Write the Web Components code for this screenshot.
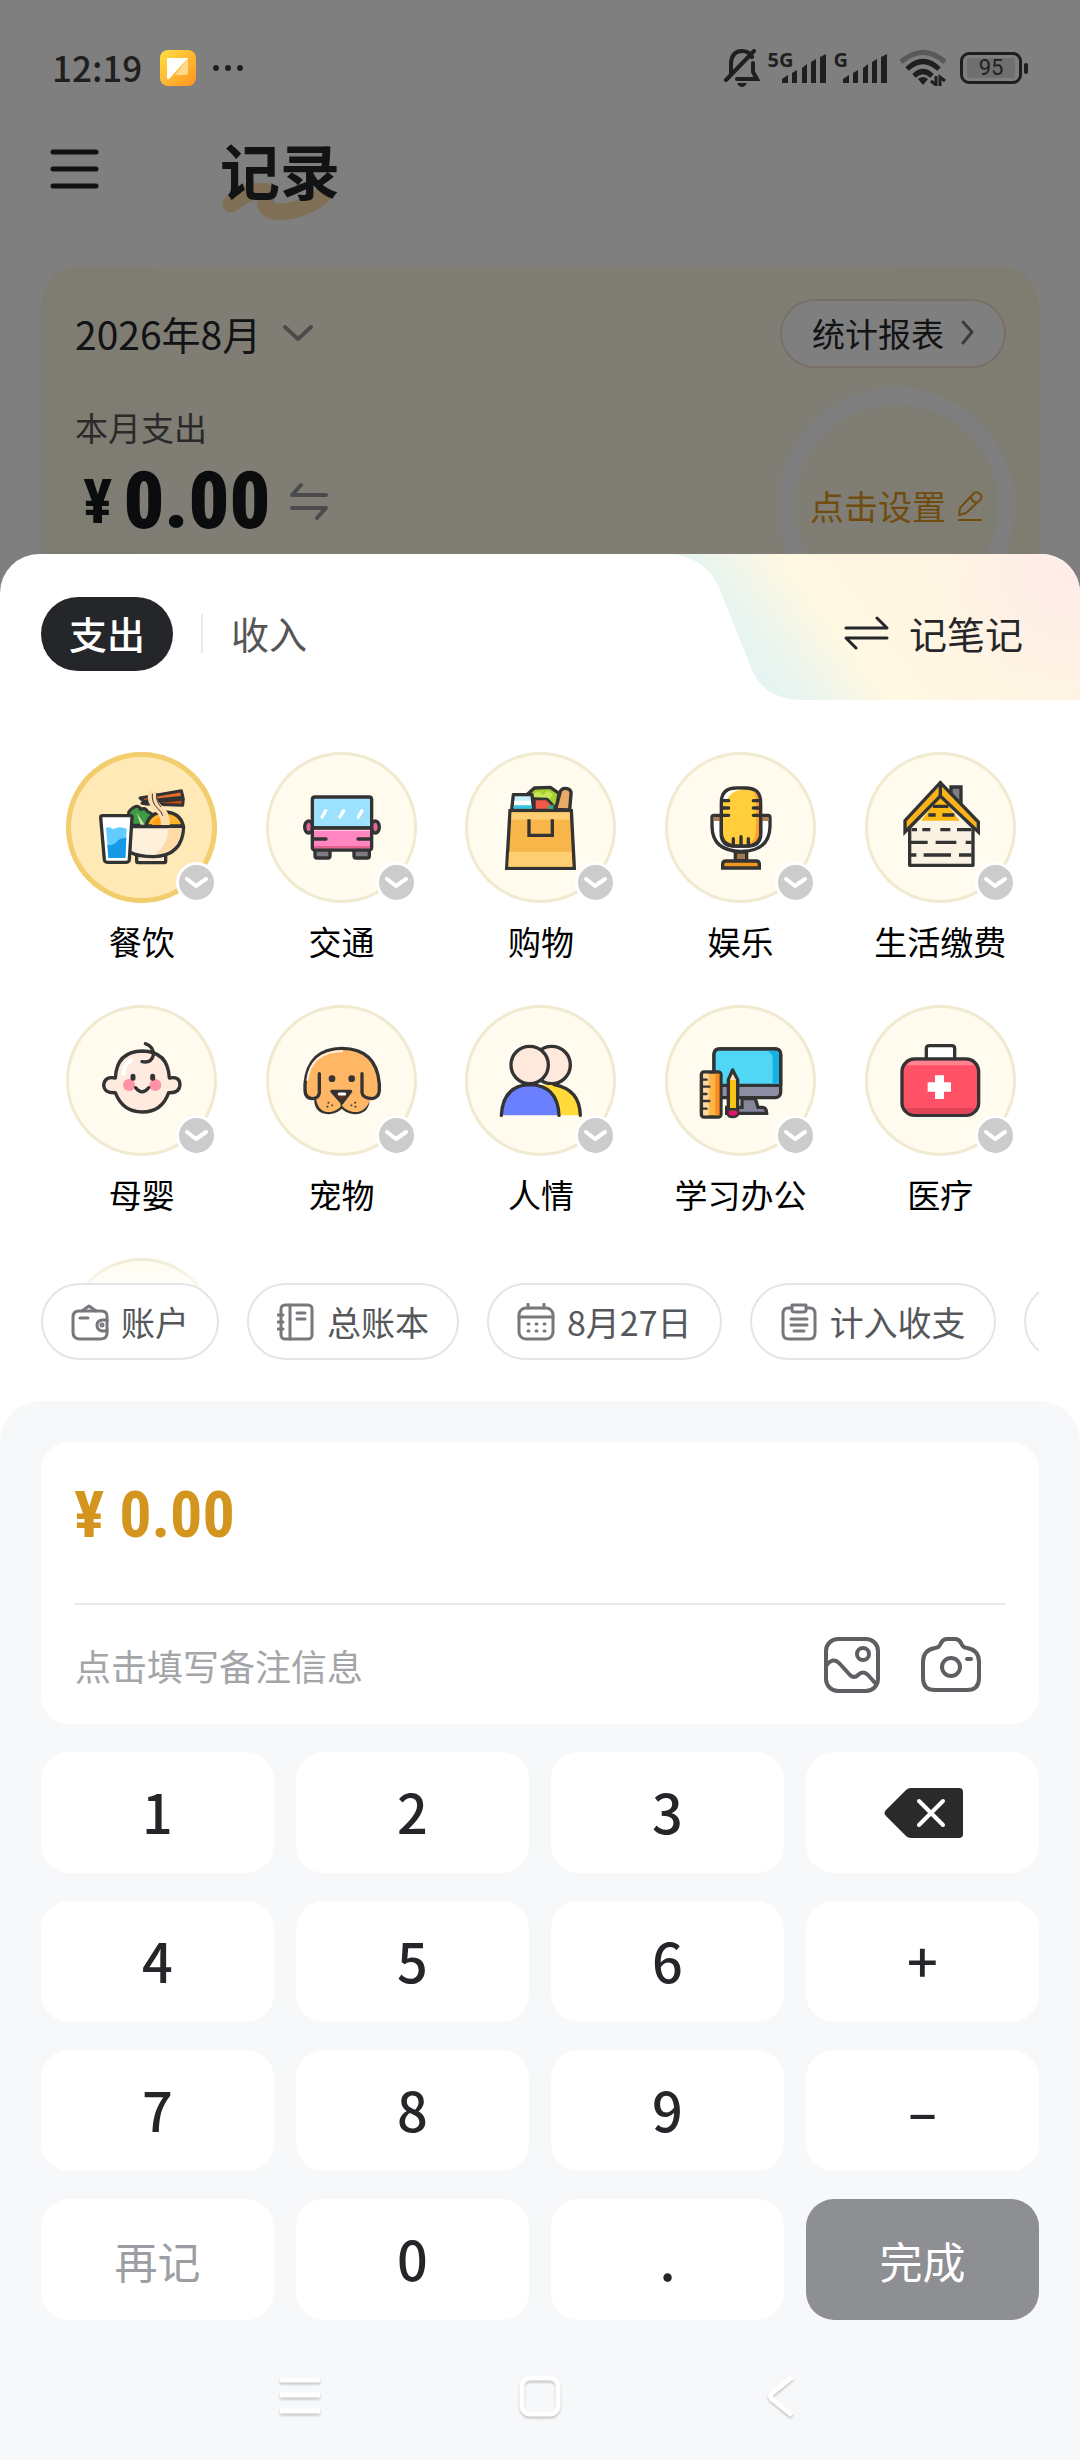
<!DOCTYPE html>
<html lang="zh-CN">
<head>
<meta charset="utf-8">
<meta name="viewport" content="width=device-width, initial-scale=1">
<title>记录</title>
<style>
  html, body { margin: 0; }
  body {
    background: #f7f8fa;
    color: #25262a;
    font-family: "Noto Sans CJK SC", "Noto Sans", sans-serif;
    font-size: 33px;
    --ink: #25262a;
    --gold: #d4951f;
    --gutter: 41px;
    --narrow: "Liberation Sans Narrow", "Roboto Condensed", Roboto, sans-serif;
  }
</style>
</head>
<body>
<ledger-app></ledger-app>

<script>
const reset = `
  *, *::before, *::after { box-sizing: border-box; }
  button, input { font: inherit; color: inherit; border: 0; background: none; padding: 0; margin: 0; }
  button { cursor: pointer; }
  svg { display: block; flex: none; }
`;

function define(name, css, html) {
  const template = document.createElement('template');
  template.innerHTML = `<style>${reset}${css}</style>`;
  customElements.define(name, class extends HTMLElement {
    constructor() {
      super();
      this.attachShadow({ mode: 'open' });
    }
    connectedCallback() {
      if (this.shadowRoot.childNodes.length) return;
      this.shadowRoot.appendChild(template.content.cloneNode(true));
      const body = document.createElement('template');
      body.innerHTML = typeof html === 'function' ? html(this) : html;
      this.shadowRoot.appendChild(body.content);
    }
  });
}

/* ---------- category pictures ---------- */

const line = 'stroke="#333" stroke-width="10" stroke-linejoin="round" stroke-linecap="round"';

const pictures = {
  food: `<svg viewBox="78 66 453 453"><g ${line} fill="none">
    <path d="M266 285V246Q276 232 288 229Q298 228 302 238Q316 232 322 244L336 252V286Z" fill="#3f9a45" stroke-width="9"/>
    <path d="M290 248L302 284H314Z" fill="#c9e6a0" stroke="none"/>
    <path d="M319 288Q326 248 372 246Q420 246 430 288Z" fill="#ffb52b"/>
    <path d="M336 286Q342 262 370 262L384 286Z" fill="#ff9d12" stroke="none"/>
    <path d="M300 204L424 182L429 202L312 214Z" fill="#e36b2e" stroke-width="9"/>
    <path d="M306 220L430 207L428 226L318 222Z" fill="#c64a12" stroke-width="9"/>
    <path d="M338 184Q332 214 352 232Q378 250 376 286" stroke="#ffdcae" stroke-width="27" stroke-linecap="butt"/>
    <path d="M337 192Q334 218 354 236Q364 244 368 256" stroke-width="3"/>
    <path d="M350 190Q346 212 362 230" stroke-width="3"/>
    <rect x="290" y="376" width="87" height="22" rx="4" fill="#ffe9cf"/>
    <path d="M272 290H431Q428 378 340 380Q296 380 268 366Z" fill="#fff0dc"/>
    <path d="M384 295H425Q420 368 344 374Q384 346 384 295Z" fill="#ffdaa6" stroke="none"/>
    <path d="M182 262Q182 257 188 257H272Q277 257 276 263L268 389Q267 397 259 397H202Q194 397 193 389Z" fill="#fff"/>
    <path d="M198 294Q208 288 220 298Q236 286 260 296L256 384H206Z" fill="#62ccff" stroke="none"/>
    <path d="M202 344Q218 350 230 336Q240 322 259 324L256 384H205Z" fill="#169ae7" stroke="none"/>
  </g></svg>`,
  bus: `<svg viewBox="678 66 453 453"><g ${line}>
    <ellipse cx="806" cy="291" rx="12" ry="18" fill="#e06a9c"/><ellipse cx="1006" cy="291" rx="12" ry="18" fill="#e06a9c"/>
    <rect x="825" y="356" width="45" height="28" rx="6" fill="#7b7b80"/><rect x="942" y="356" width="46" height="28" rx="6" fill="#7b7b80"/>
    <path d="M817 294V209Q817 201 825 201H987Q995 201 995 209V294Z" fill="#9ce2ff"/>
    <path d="M817 294H995V352Q995 360 987 360H825Q817 360 817 352Z" fill="#ff86c1"/>
    <path d="M822 348H990V355H822Z" fill="#e5638f" stroke="none"/><path d="M822 300H990V303H822Z" fill="#ffc3e0" stroke="none"/>
    <path d="M822 327H858M954 327H990" fill="none"/>
    <path d="M846 261L857 242M900 261L911 242M955 261L966 242" stroke="#fff"/>
  </g></svg>`,
  bag: `<svg viewBox="1278 66 453 453"><g ${line}>
    <path d="M1462 196L1486 174L1534 172L1560 190L1552 240H1474Z" fill="#a4cf2d"/>
    <path d="M1478 192L1500 184L1512 196L1524 182L1542 192L1532 208H1490Z" fill="#c4e655" stroke="none"/>
    <path d="M1550 238L1564 184Q1570 172 1584 176Q1598 180 1596 192L1592 240Z" fill="#e9ac66"/>
    <path d="M1486 206L1524 207L1544 228V240H1486Z" fill="#f15b45" stroke-width="8"/>
    <path d="M1526 228L1543 224V240H1530Z" fill="#27b08b" stroke="none"/>
    <path d="M1423 194H1479L1484 240H1418Z" fill="#c5f1fb"/>
    <path d="M1426 212H1476V226H1425Z" fill="#fff" stroke="none"/><path d="M1425 226H1478V236H1424Z" fill="#37c3e0" stroke="none"/>
    <path d="M1413 242H1597L1606 415H1403Z" fill="#f7b54a" stroke-linejoin="miter"/>
    <path d="M1418 247H1592L1593 269H1417ZM1410 365H1598L1600 410H1408Z" fill="#ffcd72" stroke="none"/>
    <path d="M1470 268V316H1540V268" fill="none" stroke-linecap="butt" stroke-linejoin="miter"/>
  </g></svg>`,
  mic: `<svg viewBox="375 66 453 453"><g ${line} fill="none">
    <path d="M586 366H620V392H586Z" fill="#a5784c"/>
    <path d="M548 414V402Q548 393 558 393H648Q658 393 658 402V414Z" fill="#f0951d" stroke-linejoin="miter"/>
    <path d="M516 262Q516 256 522 256H544V320Q548 346 578 348H628Q658 346 662 320V256H684Q690 256 690 262V290Q688 364 603 364Q518 364 516 290Z" fill="#fff"/>
    <path d="M521 261H541V273H521ZM665 261H685V273H665Z" fill="#b08055" stroke="none"/>
    <path d="M544 218Q544 174 590 174H616Q662 174 662 218V306Q662 348 616 348H590Q544 348 544 306Z" fill="#ffce3a"/>
    <path d="M549 218Q549 179 590 179H616Q572 178 560 212Z" fill="#fff" stroke="none"/>
    <path d="M640 182Q657 190 657 218V306Q657 340 620 343Q648 334 648 306V218Q648 196 640 182Z" fill="#ff9d2e" stroke="none"/>
    <path d="M548 212H566M548 234H566M548 256H566M640 212H658M640 234H658M640 256H658M580 342V326M603 342V320M625 342V326"/>
  </g></svg>`,
  house: `<svg viewBox="972 66 453 453"><g ${line}>
    <path d="M1230 171H1260V234L1230 206Z" fill="#7c7f87" stroke-linejoin="miter"/>
    <path d="M1198 192L1106 292V406H1296V292Z" fill="#faf3e4"/>
    <path d="M1198 196L1140 272H1256Z" fill="#fbb915" stroke="none"/>
    <path d="M1198 158L1092 272V306L1198 198L1312 306V276Z" fill="#fbb31c" stroke-linejoin="miter"/>
    <path d="M1198 158V196"/>
    <path d="M1176 229H1222M1162 255H1184M1204 255H1240M1112 299H1128M1144 299H1168M1198 299H1228M1248 299H1290M1110 337H1160M1184 337H1246M1274 337H1292M1110 375H1126M1148 375H1230M1254 375H1292" fill="none" stroke-linecap="butt"/>
  </g></svg>`,
  baby: `<svg viewBox="78 75 453 453"><g ${line}>
    <path d="M226 294Q230 214 307 213Q384 214 388 294Q420 288 420 315Q418 340 386 338Q366 396 307 396Q248 396 226 338Q192 340 191 315Q194 288 226 294Z" fill="#feeadf"/>
    <path d="M250 282Q252 252 274 240" stroke="#fff" stroke-width="12" fill="none"/>
    <circle cx="267" cy="315" r="18" fill="#ff93a5" stroke="none"/><circle cx="346" cy="315" r="18" fill="#ff93a5" stroke="none"/>
    <path d="M279 289V295M338 289V295" stroke-width="15"/>
    <path d="M287 323Q306 348 326 323M316 191Q342 200 340 226Q334 250 306 245" fill="none"/>
  </g></svg>`,
  dog: `<svg viewBox="678 75 453 453"><g ${line}>
    <path d="M828 352Q824 396 866 398Q894 396 905 378Q918 396 944 398Q986 396 984 352Z" fill="#ffb765"/>
    <path d="M795 318Q800 206 906 205Q1012 206 1018 318V334Q1012 356 992 356Q976 400 940 396Q916 392 905 376Q894 392 872 396Q836 400 828 356Q800 356 795 334Z" fill="#ffb765" stroke="none"/>
    <path d="M838 281V338Q836 356 816 356Q796 354 795 332V312Q804 206 906 205Q1010 206 1018 312V332Q1016 354 996 356Q968 354 966 338V281" fill="none"/>
    <path d="M802 300Q812 216 906 213" stroke="#fff1df" stroke-width="6" fill="none"/>
    <circle cx="876" cy="296" r="10" fill="#333" stroke="none"/><circle cx="935" cy="296" r="10" fill="#333" stroke="none"/>
    <path d="M876 334H932L906 368Z" fill="#6b3410"/><path d="M898 342H914" stroke="#fff" stroke-width="9"/>
    <path d="M904 366V376M862 380h1M876 376h1M865 368h1M934 376h1M946 380h1M945 368h1" stroke-width="5" fill="none"/>
  </g></svg>`,
  people: `<svg viewBox="1278 75 453 453"><g ${line} stroke-linecap="butt">
    <circle cx="1538" cy="255" r="56" fill="#ffe9dc"/>
    <path d="M1500 315H1545Q1622 328 1624 406H1540Z" fill="#ffda38" stroke="none"/>
    <path d="M1545 314Q1622 328 1624 406" fill="none"/>
    <circle cx="1472" cy="255" r="56" fill="#ffe9dc"/>
    <path d="M1387 406Q1392 316 1472 314Q1556 316 1560 406" fill="#6a80ff"/>
  </g></svg>`,
  office: `<svg viewBox="375 75 453 453"><g ${line}>
    <path d="M606 356H646L654 382H668Q680 384 680 400H560V382H606Z" fill="#85869a" stroke-linejoin="miter"/>
    <rect x="522" y="207" width="200" height="146" rx="16" fill="#8d8ea3"/>
    <path d="M522 316V224Q522 207 538 207H706Q722 207 722 224V316Z" fill="#4fd7f5"/>
    <path d="M684 214Q698 222 698 238V311H717V224Q716 212 700 212H684Z" fill="#15b1e2" stroke="none"/>
    <rect x="484" y="276" width="59" height="135" rx="8" fill="#ffb648"/>
    <path d="M490 281H506V406H490Z" fill="#ffd9a0" stroke="none"/><path d="M526 281H538V406H526Z" fill="#ff8a1d" stroke="none"/>
    <path d="M486 299H500M486 320H508M486 342H500M486 363H508M486 386H500" stroke-width="7"/>
    <path d="M565 300L578 270L593 300V402Q590 410 578 410Q566 410 565 402Z" fill="#fbc412"/>
    <path d="M570 300L578 282L588 300Z" fill="#ffe3c5" stroke="none"/>
    <path d="M566 392H592V402Q590 407 578 407Q568 407 566 402Z" fill="#e5136f" stroke="none"/>
    <path d="M566 388H592M578 270V276" stroke-width="8"/>
  </g></svg>`,
  medical: `<svg viewBox="972 75 453 453"><g ${line}>
    <path d="M1156 238V206Q1156 197 1165 197H1232Q1241 197 1241 206V238" fill="#fff"/>
    <rect x="1083" y="237" width="230" height="169" rx="38" fill="#ff5266"/>
    <path d="M1096 256Q1106 242 1122 242H1274Q1292 242 1300 256Z" fill="#ff8290" stroke="none"/>
    <path d="M1094 384H1302Q1292 401 1274 401H1122Q1104 401 1094 384Z" fill="#e04457" stroke="none"/>
    <path d="M1182 286H1209V307H1230V335H1209V357H1182V335H1160V307H1182Z" fill="#fff" stroke="none"/>
  </g></svg>`,
  none: ''
};

const chipIcons = {
  wallet: '<path d="M11 8L18 3L25 8M9 15H17"/><path d="M36 18V13Q36 8 30 8H8Q2 8 2 14V29Q2 36 9 36H29Q36 36 36 30V27"/><path d="M36 17H31Q26 18 26 22Q26 27 31 28H36Z"/><circle cx="31" cy="22" r="1"/>',
  book: '<rect x="4" y="2" width="31" height="34" rx="4"/><path d="M13 2V36M20 10H28M20 16H28M1 12H6M1 19H6M1 26H6"/>',
  calendar: '<rect x="2" y="5" width="34" height="31" rx="7"/><path d="M2 14H36M11 1V5M27 1V5M11 21h1M19 21h1M27 21h1M11 28h1M19 28h1M27 28h1"/>',
  clipboard: '<path d="M11 5H8Q3 5 3 11V30Q3 36 9 36H29Q35 36 35 30V11Q35 5 30 5H27"/><path d="M12 2H26V7Q26 9 23 9H15Q12 9 12 7ZM11 16H27M11 22H27M14 28H24"/>',
  dots: '<path d="M10 19h1M19 19h1M28 19h1"/>'
};

/* ---------- status bar ---------- */

const signal = '<svg width="44" height="30" viewBox="0 0 44 30" fill="currentColor"><path d="M0 29V25L6 21V29ZM10 29V19L15 16V29ZM20 29V14L25 10V29ZM29 29V8L34 5V29ZM38 29V3L44 0V29Z"/></svg>';

define('status-bar', `
  :host { display: flex; align-items: center; height: 136px; padding: 0 52px; color: #1f1f1f; }
  .time { font-size: 35px; font-weight: 500; line-height: 48px; margin: 0 18px 2px 0; }
  .dots { margin-left: 16px; }
  .right { margin-left: auto; display: flex; align-items: center; gap: 8px; }
  .net { display: flex; align-items: flex-start; font: 700 20px/20px "Open Sans", sans-serif; height: 36px; }
  .net svg { margin: 4px 0 0 -12px; }
  .net.one svg { margin-left: -5px; }
  .wifi { margin: 0 6px 0 5px; }
  .battery { display: flex; align-items: center; gap: 2px; }
  .battery span {
    width: 62px; height: 32px; border: 3px solid #1f1f1f; border-radius: 9px;
    background: #6f6f6f; background-clip: content-box; padding: 3px 4px;
    font: 400 22px/20px Roboto, sans-serif; text-align: center;
  }
  .battery::after { content: ""; width: 4px; height: 11px; border-radius: 2px; background: #1f1f1f; }
`, `
  <span class="time">12:19</span>
  <svg width="36" height="36" viewBox="0 0 36 36">
    <defs><linearGradient id="n" x1="0" y1="0" x2="1" y2="1"><stop offset="0" stop-color="#ffdf43"/><stop offset="1" stop-color="#ff9421"/></linearGradient></defs>
    <rect width="36" height="36" rx="8" fill="url(#n)"/>
    <path d="M15 25L28 8V23Q28 25 26 25Z" fill="#ffd98a"/><path d="M7 8H28L9 29Q7 30 7 28Z" fill="#fff"/>
  </svg>
  <svg class="dots" width="32" height="8" viewBox="0 0 32 8" fill="currentColor"><circle cx="4" cy="4" r="3"/><circle cx="16" cy="4" r="3"/><circle cx="28" cy="4" r="3"/></svg>
  <div class="right">
    <svg width="36" height="38" viewBox="0 0 36 38" fill="none" stroke="currentColor" stroke-width="4" stroke-linecap="round">
      <path d="M7 24V14Q8 2 18 2Q25 2 28 8M29 14V23L33 30H13"/><path d="M2 31L30 2"/><path d="M13 34H23Q21 38 18 38Q15 38 13 34Z" fill="currentColor" stroke="none"/>
    </svg>
    <span class="net">5G${signal}</span>
    <span class="net one">G${signal}</span>
    <svg class="wifi" width="46" height="36" viewBox="0 0 46 36" fill="none" stroke="currentColor" stroke-width="5">
      <path d="M1 12Q23 -7 45 12" stroke="#595959"/><path d="M7 19Q23 4 39 19M14 26Q23 17 32 26"/>
      <path d="M18 29Q23 25 28 29L23 35Z" fill="currentColor" stroke="none"/><path d="M36 26V35L31 31M40 36V27L45 31" stroke-width="3"/>
    </svg>
    <div class="battery"><span>95</span></div>
  </div>
`);

/* ---------- page behind the sheet ---------- */

define('home-page', `
  :host { display: block; padding-top: 135px; background: #fff; }
  header { display: flex; align-items: center; height: 68px; padding: 0 50px; gap: 121px; }
  h1 { position: relative; margin: 0; font-size: 60px; font-weight: 700; line-height: 68px; }
  h1 svg { position: absolute; left: 2px; top: 48px; }
  h1 span { position: relative; }
  section {
    display: flex; justify-content: space-between; margin: 63px var(--gutter) 0; height: 420px;
    padding: 33px 24px 0 34px; border-radius: 40px;
    background: linear-gradient(90deg, #fffae2, #fffae8 12%, #fffae8 85%, #fff9e0);
  }
  .month { display: flex; align-items: center; gap: 22px; height: 68px; font-size: 39px; }
  .caption { margin: 36px 0 5px; line-height: 48px; color: #555; }
  .sum { display: flex; align-items: center; height: 90px; font-family: var(--narrow); font-weight: 700; color: #15181c; }
  .sum small { font-size: 62px; margin: 0 11px 0 8px; }
  .sum b { font-size: 80px; line-height: 90px; margin-right: 20px; }
  aside { display: flex; flex-direction: column; align-items: flex-end; }
  .report {
    display: flex; align-items: center; gap: 17px; height: 69px; padding: 0 30px 2px; margin-right: 9px;
    border: 2px solid #f0dfd0; border-radius: 35px; background: #fff;
  }
  .ring {
    display: flex; align-items: center; justify-content: center; gap: 11px; width: 237px; height: 237px; margin-top: 19px;
    border: 17px solid #fdfdff; border-radius: 50%; font-size: 34px; color: #e09a1c; white-space: nowrap;
  }
`, `
  <header>
    <button aria-label="菜单"><svg width="49" height="40" viewBox="0 0 49 40" stroke="#222" stroke-width="5" stroke-linecap="round"><path d="M3 3H46M3 20H46M3 37H46"/></svg></button>
    <h1><svg width="112" height="38" viewBox="0 0 112 38" fill="none" stroke="#ffdfa8" stroke-width="17" stroke-linecap="round" stroke-linejoin="round"><path d="M9 21Q44 -4 44 14Q40 34 72 27Q90 22 101 12"/></svg><span>记录</span></h1>
  </header>
  <section>
    <div>
      <button class="month">2026年8月<svg width="30" height="16" viewBox="0 0 30 16" fill="none" stroke="#999" stroke-width="4" stroke-linecap="round" stroke-linejoin="round"><path d="M2 2L15 14L28 2"/></svg></button>
      <p class="caption">本月支出</p>
      <div class="sum"><small>¥</small><b>0.00</b>
        <svg width="38" height="38" viewBox="0 0 38 38" fill="none" stroke="#96979c" stroke-width="4" stroke-linecap="round" stroke-linejoin="round"><path d="M36 13H2L11 3M2 26H36L27 36"/></svg>
      </div>
    </div>
    <aside>
      <button class="report">统计报表<svg width="13" height="25" viewBox="0 0 13 25" fill="none" stroke="#777" stroke-width="3" stroke-linecap="round" stroke-linejoin="round"><path d="M2 2L11 12L2 23"/></svg></button>
      <button class="ring">点击设置<svg width="26" height="32" viewBox="0 0 26 32" fill="none" stroke="currentColor" stroke-width="2" stroke-linejoin="round"><path d="M2 25L3 18L17 3Q20 1 23 4Q26 7 23 10L9 23ZM14 7Q15 12 20 13M1 30H25"/></svg></button>
    </aside>
  </section>
`);

/* ---------- sheet tabs ---------- */

define('sheet-tabs', `
  :host { display: flex; justify-content: space-between; height: 146px; padding-left: var(--gutter); font-size: 38px; }
  nav { display: flex; align-items: center; gap: 28px; padding-top: 13px; }
  nav button { height: 74px; padding-bottom: 3px; }
  .on { width: 132px; border-radius: 37px; background: var(--ink); color: #fff; font-weight: 500; }
  .off { color: #555; }
  .rule { width: 2px; height: 39px; background: #eaeaec; }
  .note { position: relative; width: 409px; display: flex; align-items: center; justify-content: flex-end; gap: 20px; padding: 11px 57px 0 0; }
  .shape { position: absolute; inset: 0; }
  .note span, .swap { position: relative; }
`, `
  <nav><button class="on">支出</button><i class="rule"></i><button class="off">收入</button></nav>
  <button class="note">
    <svg class="shape" width="409" height="146" viewBox="0 0 409 146">
      <defs>
        <linearGradient id="g" gradientUnits="userSpaceOnUse" x1="72" y1="110" x2="352" y2="-100">
          <stop offset="0" stop-color="#e4f4f3"/><stop offset=".1" stop-color="#ebf5ee"/><stop offset=".27" stop-color="#fff8e2"/><stop offset=".6" stop-color="#fff5e3"/><stop offset="1" stop-color="#fff2e6"/>
        </linearGradient>
        <radialGradient id="r" gradientUnits="userSpaceOnUse" cx="395" cy="20" r="120"><stop offset="0" stop-color="#ffece8"/><stop offset="1" stop-color="#ffece8" stop-opacity="0"/></radialGradient>
      </defs>
      <path d="M0 0H409V146H132C98 146 84 128 77 106L49 36Q36 4 0 0Z" fill="url(#g)"/>
      <path d="M0 0H409V146H132C98 146 84 128 77 106L49 36Q36 4 0 0Z" fill="url(#r)"/>
    </svg>
    <svg class="swap" width="45" height="34" viewBox="0 0 45 34" fill="none" stroke="#25262a" stroke-width="3" stroke-linecap="round" stroke-linejoin="round"><path d="M2 12H43L33 2M43 22H2L12 32"/></svg>
    <span>记笔记</span>
  </button>
`);

/* ---------- category ---------- */

define('category-item', `
  :host { display: block; text-align: center; color: #000; }
  button { display: inline-flex; flex-direction: column; align-items: center; gap: 14px; line-height: 49px; white-space: nowrap; }
  .disc { position: relative; width: 151px; height: 151px; border-radius: 50%; background: #fffbef; box-shadow: inset 0 0 0 3px #f0ead1; }
  :host([selected]) .disc { background: #ffe9b6; box-shadow: inset 0 0 0 5px #f2cd6d; }
  .disc > svg { width: 100%; height: 100%; }
  .more { position: absolute; right: 0; bottom: 0; width: 41px; height: 41px; border: 3px solid #fff; border-radius: 50%; background: #ccc; }
`, host => `
  <button aria-label="${host.getAttribute('label')}">
    <span class="disc">${pictures[host.getAttribute('icon')]}
      <span class="more"><svg width="35" height="35" viewBox="0 0 35 35" fill="none" stroke="#fff" stroke-width="4" stroke-linecap="round" stroke-linejoin="round"><path d="M8 14L17 21L27 14"/></svg></span>
    </span>
    <slot></slot>
  </button>
`);

define('category-grid', `
  :host {
    display: grid; grid-template-columns: repeat(5, 1fr); row-gap: 39px; align-content: start;
    height: 590px; padding: 52px 40px 0 42px; overflow: hidden; position: relative;
  }
  :host::after { content: ""; position: absolute; inset: auto 0 0; height: 34px; background: linear-gradient(#fff0, #fffc); }
`, '<slot></slot>');

/* ---------- option chips ---------- */

define('option-chip', `
  :host { display: block; flex: none; }
  button {
    display: flex; align-items: center; gap: 12px; height: 77px; padding: 0 28px;
    border: 2px solid #e3e5e6; border-radius: 39px; background: #fff; color: #55575b; font-size: 34px; white-space: nowrap;
  }
`, host => `
  <button><svg width="38" height="38" viewBox="0 0 38 38" fill="none" stroke="#77787b" stroke-width="3" stroke-linecap="round" stroke-linejoin="round">${chipIcons[host.getAttribute('icon')]}</svg><slot></slot></button>
`);

define('chip-row', `
  :host { display: flex; gap: 28px; margin: -7px var(--gutter) 41px; overflow: hidden; position: relative; }
`, '<slot></slot>');

/* ---------- amount card ---------- */

define('amount-card', `
  :host { display: block; padding: 0 33px; border-radius: 28px; background: #fff; }
  output { display: block; height: 163px; padding-top: 34px; border-bottom: 2px solid #e8e9eb; font: 700 64px/80px var(--narrow); color: var(--gold); }
  .memo { display: flex; align-items: center; height: 119px; gap: 40px; padding: 0 25px 0 1px; color: #5d5f62; }
  input { flex: 1; min-width: 0; font-size: 36px; outline: 0; color: var(--ink); }
  input::placeholder { color: #a3a5a8; opacity: 1; }
`, `
  <output>¥ 0.00</output>
  <div class="memo">
    <input type="text" aria-label="备注" placeholder="点击填写备注信息">
    <button aria-label="图片"><svg width="58" height="58" viewBox="0 0 58 58" fill="none" stroke="currentColor" stroke-width="4" stroke-linejoin="round"><rect x="3" y="3" width="52" height="52" rx="12"/><circle cx="40" cy="18" r="6"/><path d="M3 30Q10 20 17 28L27 39Q31 43 35 39Q40 34 45 39L53 48"/></svg></button>
    <button aria-label="拍照"><svg width="60" height="58" viewBox="0 0 60 58" fill="none" stroke="currentColor" stroke-width="4" stroke-linejoin="round"><path d="M14 12Q18 12 20 7Q22 3 26 3H34Q38 3 40 7Q42 12 46 12Q58 14 58 26V42Q58 54 46 54H14Q2 54 2 42V26Q2 14 14 12Z"/><circle cx="30" cy="31" r="9"/><path d="M46 23h4" stroke-linecap="round"/></svg></button>
  </div>
`);

/* ---------- keypad ---------- */

define('key-button', `
  :host { display: block; }
  button {
    display: flex; align-items: center; justify-content: center; width: 100%; height: 121px; padding-bottom: 3px;
    border-radius: 28px; background: #fff; font-size: 54px; font-weight: 500; line-height: 64px;
  }
  :host([kind="delete"]) button { padding: 0 0 0 2px; }
  :host([kind="again"]) button, :host([kind="done"]) button { padding: 0; font-size: 43px; font-weight: 400; color: #9b9ea2; }
  :host([kind="done"]) button { background: #8e8f93; color: #fff; }
`, host => `<button${host.getAttribute('kind') === 'delete' ? ' aria-label="删除"' : ''}><slot></slot></button>`);

define('key-pad', `
  :host { display: grid; grid-template-columns: repeat(4, 1fr); gap: 28px 22px; margin-top: 28px; }
`, `
  ${['1', '2', '3'].map(k => `<key-button>${k}</key-button>`).join('')}
  <key-button kind="delete"><svg width="80" height="52" viewBox="0 0 80 52"><path d="M22 3Q24 1 27 1H75Q79 1 79 5V47Q79 51 75 51H27Q24 51 22 49L2 29Q-1 26 2 23Z" fill="#2a2a2a"/><path d="M35 14L59 38M59 14L35 38" stroke="#fff" stroke-width="4" stroke-linecap="round"/></svg></key-button>
  ${['4', '5', '6', '+', '7', '8', '9', '–'].map(k => `<key-button>${k}</key-button>`).join('')}
  <key-button kind="again">再记</key-button>
  <key-button>0</key-button>
  <key-button>.</key-button>
  <key-button kind="done">完成</key-button>
`);

define('system-nav', `
  :host { display: grid; grid-template-columns: repeat(3, 240px); justify-content: center; justify-items: center; align-items: center; height: 140px; padding-top: 12px; }
  svg { filter: drop-shadow(0 2px 1px #0003); }
`, `
  <button aria-label="任务"><svg width="42" height="42" viewBox="0 0 42 42" stroke="#fff" stroke-width="5"><path d="M1 5H41M1 20H41M1 36H41"/></svg></button>
  <button aria-label="主页"><svg width="42" height="42" viewBox="0 0 42 42" fill="none" stroke="#fff" stroke-width="5"><rect x="3" y="3" width="36" height="36" rx="8"/></svg></button>
  <button aria-label="返回"><svg width="28" height="42" viewBox="0 0 28 42" fill="none" stroke="#fff" stroke-width="5"><path d="M26 2L6 18Q3 21 6 24L26 40"/></svg></button>
`);

/* ---------- sheet and shell ---------- */

define('entry-sheet', `
  :host { display: block; border-radius: 39px 39px 0 0; background: #fff; overflow: hidden; }
  .panel { padding: 41px var(--gutter) 0; border-radius: 41px 41px 0 0; background: #f7f8fa; }
`, `
  <sheet-tabs></sheet-tabs>
  <category-grid>
    <category-item icon="food" label="餐饮" selected>餐饮</category-item>
    <category-item icon="bus" label="交通">交通</category-item>
    <category-item icon="bag" label="购物">购物</category-item>
    <category-item icon="mic" label="娱乐">娱乐</category-item>
    <category-item icon="house" label="生活缴费">生活缴费</category-item>
    <category-item icon="baby" label="母婴">母婴</category-item>
    <category-item icon="dog" label="宠物">宠物</category-item>
    <category-item icon="people" label="人情">人情</category-item>
    <category-item icon="office" label="学习办公">学习办公</category-item>
    <category-item icon="medical" label="医疗">医疗</category-item>
    <category-item icon="none" label="其他"></category-item>
  </category-grid>
  <chip-row>
    <option-chip icon="wallet">账户</option-chip>
    <option-chip icon="book">总账本</option-chip>
    <option-chip icon="calendar">8月27日</option-chip>
    <option-chip icon="clipboard">计入收支</option-chip>
    <option-chip icon="dots"></option-chip>
  </chip-row>
  <div class="panel">
    <amount-card></amount-card>
    <key-pad></key-pad>
    <system-nav></system-nav>
  </div>
`);

define('ledger-app', `
  :host { display: grid; grid-template-columns: minmax(0, 1fr); min-height: 100vh; background: #fff; }
  :host > * { grid-area: 1 / 1; }
  home-page, status-bar, .scrim, entry-sheet { grid-area: 1 / 1; }
  home-page, status-bar { align-self: start; }
  .scrim { background: #00000080; z-index: 1; }
  status-bar { z-index: 2; }
  entry-sheet { align-self: end; z-index: 3; }
`, `
  <home-page></home-page>
  <div class="scrim"></div>
  <status-bar></status-bar>
  <entry-sheet></entry-sheet>
`);
</script>
</body>
</html>
